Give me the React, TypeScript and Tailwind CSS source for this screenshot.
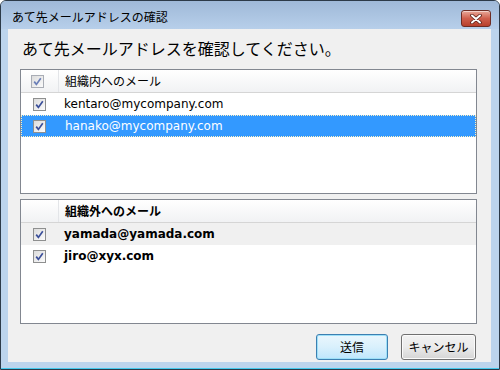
const font = { fontFamily: '"DejaVu Sans", "Noto Sans CJK JP", sans-serif' };
const jp = { fontFamily: '"Noto Sans CJK JP", sans-serif' };

function Check({ dim = false }: { dim?: boolean }) {
  return (
    <div
      className={`w-[13px] h-[13px] border flex items-center justify-center bg-gradient-to-br from-[#dcdcdc] to-[#fbfbfb] ${
        dim ? "border-[#a9adb5]" : "border-[#8e8f8f]"
      }`}
    >
      <svg width="9" height="9" viewBox="0 0 9 9">
        <path
          d="M1.2 4.6 L3.4 7.4 L7.8 1.2"
          fill="none"
          stroke={dim ? "#6b7fb8" : "#3b4f9a"}
          strokeWidth="1.7"
        />
      </svg>
    </div>
  );
}

type Row = { email: string; selected?: boolean; soft?: boolean };

function ListBox({ title, rows, bold }: { title: string; rows: Row[]; bold?: boolean }) {
  return (
    <div className="mx-[12px] mr-[14px] h-[125px] border border-[#828790] bg-white flex flex-col">
      <div className="h-[23px] flex border-b border-[#d5d5d5] bg-gradient-to-b from-white to-[#f1f2f4]">
        <div className="w-[38px] flex items-center pl-[10px] border-r border-[#e3e5e8]">
          {!bold && <Check dim />}
        </div>
        <div className={`pl-[6px] flex items-center text-[12px] text-black ${bold ? "font-bold" : ""}`} style={jp}>
          {title}
        </div>
      </div>
      {rows.map((r) => (
        <div
          key={r.email}
          className={`h-[22px] flex items-center ${
            r.selected
              ? "bg-[#3399ff] text-white border border-dotted border-[#fff2c0]"
              : r.soft
              ? "bg-[#f0f0f0] text-black"
              : "text-black"
          }`}
        >
          <div className={`w-[43px] flex items-center ${r.selected ? "pl-[11px]" : "pl-[12px]"}`}>
            <Check />
          </div>
          <span className={`text-[12px] ${bold ? "font-bold" : ""}`} style={font}>
            {r.email}
          </span>
        </div>
      ))}
    </div>
  );
}

export default function App() {
  return (
    <div className="w-[500px] h-[370px] border border-[#2c3a48] rounded-t-[6px] overflow-hidden flex flex-col bg-[#bcd4ec]">
      {/* title bar */}
      <div className="h-[28px] flex items-start bg-gradient-to-b from-[#9fb9d8] to-[#b7cfea]">
        <div className="pl-[11px] pt-[8px] text-[12px] text-black leading-[16px]" style={jp}>
          あて先メールアドレスの確認
        </div>
        <div className="ml-auto mr-[8px] mt-[9px] w-[30px] h-[17px] rounded-[3px] border border-[#6e2d24] bg-gradient-to-b from-[#e8a899] via-[#cf5f4c] to-[#b8402c] flex items-center justify-center shadow-[inset_0_1px_0_rgba(255,255,255,0.5)]">
          <svg width="12" height="10" viewBox="0 0 12 10">
            <path d="M2 1.5 L10 8.5 M10 1.5 L2 8.5" stroke="#5a2018" strokeWidth="3.6" strokeLinecap="round" />
            <path d="M2 1.5 L10 8.5 M10 1.5 L2 8.5" stroke="#ffffff" strokeWidth="2" strokeLinecap="round" />
          </svg>
        </div>
      </div>

      <div className="flex-1 flex">
        <div className="w-[7px]" />
        {/* client */}
        <div className="flex-1 bg-[#f0f0f0] flex flex-col">
          <div className="h-[40px] pl-[14px] pt-[7px] text-[16px] leading-[24px] text-black" style={jp}>
            あて先メールアドレスを確認してください。
          </div>
          <ListBox
            title="組織内へのメール"
            rows={[
              { email: "kentaro@mycompany.com" },
              { email: "hanako@mycompany.com", selected: true },
            ]}
          />
          <div className="h-[5px]" />
          <ListBox
            title="組織外へのメール"
            bold
            rows={[{ email: "yamada@yamada.com", soft: true }, { email: "jiro@xyx.com" }]}
          />
          <div className="flex justify-end gap-[13px] pr-[15px] mt-[10px]">
            <button
              className="w-[72px] h-[26px] rounded-[3px] border border-[#3c7fb1] bg-gradient-to-b from-[#eaf6fd] via-[#d9f0fc] to-[#bee6fd] text-[12px] text-black shadow-[inset_0_0_0_1px_#9ee0f8]"
              style={jp}
            >
              送信
            </button>
            <button
              className="w-[75px] h-[26px] rounded-[3px] border border-[#707070] bg-gradient-to-b from-[#f2f2f2] via-[#ebebeb] to-[#d5d5d5] text-[12px] text-black shadow-[inset_0_0_0_1px_#fbfbfb]"
              style={jp}
            >
              キャンセル
            </button>
          </div>
        </div>
        <div className="w-[8px]" />
      </div>
      <div className="h-[6px]" />
      <div className="h-[1px] bg-[#44c9ec]" />
    </div>
  );
}
